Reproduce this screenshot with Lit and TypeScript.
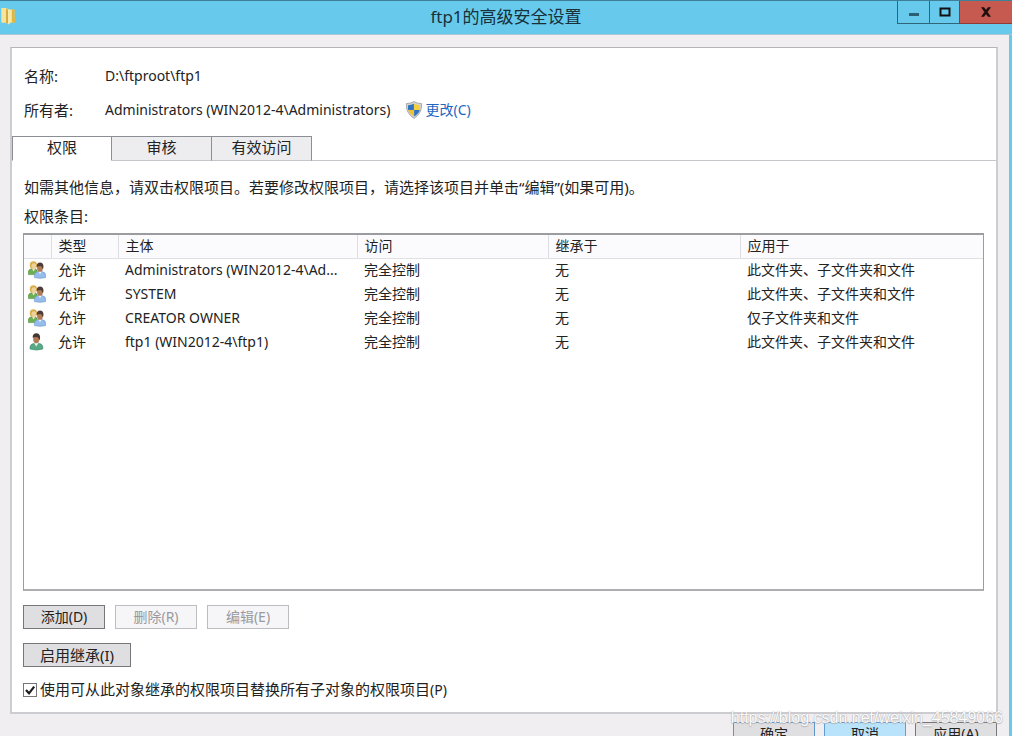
import { LitElement, html, css, svg } from "lit";
import { customElement, state } from "lit/decorators.js";
import { classMap } from "lit/directives/class-map.js";

interface Entry {
  kind: "group" | "user";
  type: string;
  principal: string;
  access: string;
  inherited: string;
  applies: string;
}

const ENTRIES: Entry[] = [
  { kind: "group", type: "允许", principal: "Administrators (WIN2012-4\\Ad...", access: "完全控制", inherited: "无", applies: "此文件夹、子文件夹和文件" },
  { kind: "group", type: "允许", principal: "SYSTEM", access: "完全控制", inherited: "无", applies: "此文件夹、子文件夹和文件" },
  { kind: "group", type: "允许", principal: "CREATOR OWNER", access: "完全控制", inherited: "无", applies: "仅子文件夹和文件" },
  { kind: "user", type: "允许", principal: "ftp1 (WIN2012-4\\ftp1)", access: "完全控制", inherited: "无", applies: "此文件夹、子文件夹和文件" },
];

const TABS = ["权限", "审核", "有效访问"];

const groupIcon = html`<svg class="icon" viewBox="0 0 18 18" width="18" height="18" aria-hidden="true">
  ${svg`
    <path d="M0.3 13.6V11Q0.5 8.4 3.5 7.8L7 7.8Q9.4 8.4 9.4 11V13.6Z" fill="#6fae54" stroke="#55923f" stroke-width=".6"/>
    <path d="M4 7.6L5.5 10.6L7.5 7.6Z" fill="#eaf2df"/>
    <ellipse cx="5.4" cy="4.2" rx="3.6" ry="4" fill="#d9ae4c"/>
    <ellipse cx="5.8" cy="5.2" rx="2.3" ry="2.9" fill="#f0d09a"/>
    <path d="M6.4 16.6V14.3Q6.6 11.2 9.8 10.6H14Q17.7 11.3 17.7 14.4V16.6Q12 18 6.4 16.6Z" fill="#94bdec" stroke="#6b93cc" stroke-width=".6"/>
    <path d="M10.2 10.2L12 13.2L13.9 10.2Z" fill="#f1f6fb"/>
    <ellipse cx="12" cy="6.9" rx="2.9" ry="3.9" fill="#b07a55"/>
    <path d="M8.8 6.2Q8.2 1.4 12.3 1.4Q16 1.5 15.4 7.2L14.5 7.8Q14.3 5.2 12.5 4.9Q10.2 4.9 8.8 6.2Z" fill="#4f3d36"/>
  `}
</svg>`;

const userIcon = html`<svg class="icon" viewBox="0 0 18 18" width="18" height="18" aria-hidden="true">
  ${svg`
    <path d="M2 16V14Q2.2 11.1 6.2 10.3H10.6Q14.8 11.1 14.8 14V16Q8.8 18.2 2 16Z" fill="#58a986" stroke="#3d8a6b" stroke-width=".6"/>
    <path d="M6 9.8L8.2 13.6L10.6 9.8Z" fill="#eef4ef"/>
    <ellipse cx="8.3" cy="5.8" rx="3.1" ry="4.5" fill="#b07a55"/>
    <path d="M4.7 4.8Q4.4 .2 8.7 .3Q12.9 .5 11.9 6.4L11.1 7Q11 4.4 9 4Q6.6 3.8 4.7 4.8Z" fill="#463630"/>
  `}
</svg>`;

const shieldIcon = html`<svg class="icon" viewBox="0 0 18 18" width="18" height="18" aria-hidden="true">
  ${svg`
    <path d="M9 .6Q11.8 2.4 16.6 2.6Q17.4 12 9 17.5Q.6 12 1.4 2.6Q6.2 2.4 9 .6Z" fill="#d2d3d2" stroke="#9b9c9b" stroke-width=".8"/>
    <path d="M8.9 2.8V9H3.2Q2.8 6.6 3.1 4.2Q6.4 4 8.9 2.8Z" fill="#2f74c0"/>
    <path d="M9.1 2.8V9H14.8Q15.2 6.6 14.9 4.2Q11.6 4 9.1 2.8Z" fill="#f5cf3c"/>
    <path d="M3.2 9H8.9V15.6Q4.3 12.6 3.2 9Z" fill="#f0c22f"/>
    <path d="M14.8 9H9.1V15.6Q13.7 12.6 14.8 9Z" fill="#2f74c0"/>
  `}
</svg>`;

const folderIcon = html`<svg class="icon" viewBox="0 0 16 18" width="16" height="18" aria-hidden="true">
  ${svg`
    <path d="M1.5 1H6L8 2.5H14.5V15.5H1.5Z" fill="#f0d67a"/>
    <path d="M1.5 1H6V15.5H1.5Z" fill="#f6e49a"/>
    <path d="M12 2.5H14.5V10L15.5 11.5V15.5H12Z" fill="#dfb63f"/>
    <path d="M6 1.5L11.5 3.2V15L8.4 17.4L6 15.8Z" fill="#f8e9a8"/>
    <path d="M6 1.5L8 3V17L6 15.8Z" fill="#d3ac40"/>
  `}
</svg>`;

@customElement("app-root")
export class AppRoot extends LitElement {
  @state() private activeTab = 0;
  @state() private replaceChildren = true;

  static styles = css`
    :host {
      display: flex;
      flex-direction: column;
      height: 100vh;
      overflow: hidden;
      position: relative;
      box-sizing: border-box;
      background: #f0eef1;
      color: #222;
      font: 14px/20px "Noto Sans", "Noto Sans CJK SC", sans-serif;
    }
    * { box-sizing: border-box; }
    button { font: inherit; color: inherit; }
    .icon { display: block; flex: none; }

    .titlebar {
      display: grid;
      grid-template-columns: 1fr auto 1fr;
      flex: none;
      height: 35px;
      background: #67caec;
      border-top: 1px solid #3f7f98;
      border-bottom: 1px solid #a9c5d6;
    }
    .folder { padding-top: 6px; }
    .title {
      margin: 0;
      font-size: 17px;
      line-height: 32px;
      font-weight: 400;
      color: #17303a;
    }
    .controls { display: flex; justify-content: flex-end; align-items: flex-start; }
    .control {
      display: grid;
      place-items: center;
      width: 32px;
      height: 23px;
      padding: 0;
      background: transparent;
      border: 1px solid #2f6678;
      border-width: 0 0 1px 1px;
    }
    .control.max { width: 30px; }
    .control.close { width: 53px; background: #c75a50; border-color: #8f3a34; }

    .body {
      flex: 1;
      min-height: 0;
      padding: 12px 11px 0 10px;
      border-right: 3px solid #67caec;
    }
    .panel {
      background: #fff;
      border: 2px solid #cdccd0;
      border-width: 1px 2px 2px;
      border-top-color: #b4b3b7;
    }
    .props {
      display: grid;
      grid-template-columns: 81px 1fr;
      row-gap: 14px;
      margin: 0;
      padding: 18px 12px 16px;
    }
    .props dt, .text { font-size: 15px; }
    .props dd { display: flex; align-items: center; gap: 14px; margin: 0; }
    .change {
      display: flex;
      align-items: center;
      gap: 3px;
      color: #1f66bf;
      text-decoration: none;
    }

    .tabs { display: flex; border-bottom: 1px solid #c6c6ca; }
    .tab {
      width: 100px;
      height: 25px;
      margin-bottom: -1px;
      padding: 0 0 3px;
      font-size: 15px;
      line-height: 20px;
      background: #ededf0;
      border: 1px solid #8c8e96;
      border-width: 1px 1px 1px 0;
      border-bottom-color: #c6c6ca;
    }
    .tab.active { background: #fff; border-bottom-color: #fff; }
    .tab:first-child { border-left-width: 1px; }

    .content { padding: 16px 12px 12px 11px; }
    .text { margin: 0 0 9px; padding-left: 1px; }
    .text.caption { margin-bottom: 7px; }

    .list {
      min-height: 358px;
      border: 2px solid #9b9ca0;
      border-width: 2px 1px;
      border-bottom-color: #adaeb2;
      background: #fff;
    }
    .grid { width: 100%; table-layout: fixed; border-collapse: collapse; }
    .c-icon { width: 27px; }
    .c-type { width: 67px; }
    .c-principal { width: 239px; }
    .c-access { width: 191px; }
    .c-inherited { width: 192px; }
    .grid th, .grid td {
      height: 24px;
      padding: 0 7px;
      font-weight: 400;
      text-align: left;
      white-space: nowrap;
      overflow: hidden;
      text-overflow: ellipsis;
      line-height: 20px;
    }
    .grid th {
      height: 23px;
      background: #fbfbfd;
      border-bottom: 1px solid #dfdfe4;
      border-left: 1px solid #dcdce2;
    }
    .grid th:first-child { border-left: 0; }
    .grid td:first-child { padding: 0 0 0 4px; }

    .actions { display: flex; gap: 10px; padding-top: 14px; }
    .btn {
      min-width: 82px;
      height: 24px;
      padding: 0 16px 1px;
      line-height: 20px;
      white-space: nowrap;
      background: #dfdee0;
      border: 1px solid #77777b;
    }
    .btn.wide { min-width: 106px; font-size: 15px; }
    .btn:disabled { color: #9a9a9e; background: #f6f5f7; border-color: #bdbdc1; }
    .btn.ok { border-color: #5f95c9; }
    .btn.cancel { background: #b9e3fa; border-color: #5f9fd4; }

    .check {
      display: flex;
      align-items: center;
      gap: 3px;
      padding-top: 12px;
      font-size: 15px;
    }
    .box { display: grid; width: 14px; height: 14px; }
    .box > * { grid-area: 1 / 1; }
    .box input {
      appearance: none;
      width: 14px;
      height: 14px;
      margin: 0;
      background: #fff;
      border: 1px solid #77777b;
    }
    .tick { pointer-events: none; }
    .latin { font-size: 14px; }

    .footer { display: flex; justify-content: flex-end; gap: 9px; padding: 8px 1px 10px; }
    .watermark {
      position: absolute;
      right: 9px;
      bottom: 8px;
      font: 16px/20px "Liberation Sans", sans-serif;
      color: #fff;
      text-shadow: 0 0 1px #8f8f93, 0 1px 1px #b5b5b9;
      opacity: .9;
      pointer-events: none;
    }
  `;

  render() {
    return html`
      <header class="titlebar">
        <div class="folder">${folderIcon}</div>
        <h1 class="title">ftp1的高级安全设置</h1>
        <div class="controls">
          <button class="control" aria-label="最小化">
            <svg width="12" height="12" viewBox="0 0 12 12"><path d="M1 8.5H11" stroke="#2c5f72" stroke-width="3" /></svg>
          </button>
          <button class="control max" aria-label="最大化">
            <svg width="12" height="12" viewBox="0 0 12 12"><path d="M1.5 2.5H10.5V9.5H1.5Z" fill="none" stroke="#111" stroke-width="2" /></svg>
          </button>
          <button class="control close" aria-label="关闭">
            <svg width="12" height="12" viewBox="0 0 12 12"><path d="M1.5 1.5H4L6 4.2L8 1.5H10.5L7.4 6L10.5 10.5H8L6 7.8L4 10.5H1.5L4.6 6Z" fill="#1c0f0e" stroke="#1c0f0e" stroke-width=".5" /></svg>
          </button>
        </div>
      </header>

      <main class="body">
        <section class="panel">
          <dl class="props">
            <dt>名称:</dt>
            <dd>D:\\ftproot\\ftp1</dd>
            <dt>所有者:</dt>
            <dd>
              <span>Administrators (WIN2012-4\\Administrators)</span>
              <a class="change" href="#owner">${shieldIcon}<span>更改(C)</span></a>
            </dd>
          </dl>

          <div class="tabs" role="tablist">
            ${TABS.map(
              (name, i) => html`<button
                role="tab"
                class=${classMap({ tab: true, active: i === this.activeTab })}
                aria-selected=${i === this.activeTab ? "true" : "false"}
                @click=${() => (this.activeTab = i)}
              >${name}</button>`
            )}
          </div>

          <div class="content">
            <p class="text">如需其他信息，请双击权限项目。若要修改权限项目，请选择该项目并单击“编辑”(如果可用)。</p>
            <p class="text caption" id="entries">权限条目:</p>
            <div class="list">
              <table class="grid" aria-labelledby="entries">
                <colgroup>
                  <col class="c-icon" /><col class="c-type" /><col class="c-principal" />
                  <col class="c-access" /><col class="c-inherited" /><col />
                </colgroup>
                <thead>
                  <tr><th></th><th>类型</th><th>主体</th><th>访问</th><th>继承于</th><th>应用于</th></tr>
                </thead>
                <tbody>
                  ${ENTRIES.map(
                    (e) => html`<tr>
                      <td>${e.kind === "group" ? groupIcon : userIcon}</td>
                      <td>${e.type}</td>
                      <td>${e.principal}</td>
                      <td>${e.access}</td>
                      <td>${e.inherited}</td>
                      <td>${e.applies}</td>
                    </tr>`
                  )}
                </tbody>
              </table>
            </div>

            <div class="actions">
              <button class="btn">添加(D)</button>
              <button class="btn" disabled>删除(R)</button>
              <button class="btn" disabled>编辑(E)</button>
            </div>
            <div class="actions">
              <button class="btn wide">启用继承(I)</button>
            </div>
            <label class="check">
              <span class="box">
                <input
                  type="checkbox"
                  .checked=${this.replaceChildren}
                  @change=${(ev: Event) => (this.replaceChildren = (ev.target as HTMLInputElement).checked)}
                />
                ${this.replaceChildren
                  ? html`<svg class="tick" width="14" height="14" viewBox="0 0 14 14"><path d="M3 7L6 10.3L11.2 3.6" fill="none" stroke="#1d1d1d" stroke-width="2.2" /></svg>`
                  : null}
              </span>
              <span>使用可从此对象继承的权限项目替换所有子对象的权限项目<span class="latin">(P)</span></span>
            </label>
          </div>
        </section>

        <footer class="footer">
          <button class="btn ok">确定</button>
          <button class="btn cancel">取消</button>
          <button class="btn">应用(A)</button>
        </footer>
      </main>
      <div class="watermark">https://blog.csdn.net/weixin_45849066</div>
    `;
  }
}
